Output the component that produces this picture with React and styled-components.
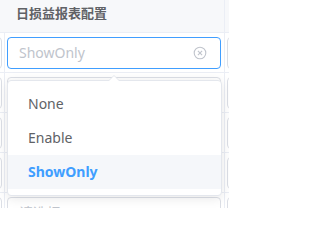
import React from "react";
import styled, { createGlobalStyle } from "styled-components";

const GlobalStyle = createGlobalStyle`
  body {
    margin: 0;
    background: #fff;
    font-family: "Noto Sans", "Noto Sans CJK SC", sans-serif;
  }
  * { box-sizing: border-box; }
`;

// rows 2-4 sit under the open dropdown, so they carry no text
const rows = [
  { placeholder: "ShowOnly", active: true },
  {},
  {},
  {},
  { placeholder: "请选择" },
];

const options = ["None", "Enable", "ShowOnly"];

export default function App() {
  return (
    <>
      <GlobalStyle />
      <Page>
        <Table>
          <HeadCell />
          <HeadCell>日损益报表配置</HeadCell>
          <HeadCell $last />
          {rows.map((row, i) => (
            <React.Fragment key={i}>
              <Cell $align="end">
                <Input />
              </Cell>
              <Cell>
                <Input $active={row.active}>
                  {row.placeholder && <Placeholder>{row.placeholder}</Placeholder>}
                  {row.active && (
                    <svg width="14" height="14" viewBox="0 0 14 14">
                      <circle cx="7" cy="7" r="5.8" fill="none" stroke="#c0c4cc" strokeWidth="1.1" />
                      <path d="M4.9 4.9 L9.1 9.1 M9.1 4.9 L4.9 9.1" stroke="#c0c4cc" strokeWidth="1.1" />
                    </svg>
                  )}
                </Input>
              </Cell>
              <Cell $last>
                <Input />
              </Cell>
            </React.Fragment>
          ))}
        </Table>
        <Dropdown>
          <Arrow />
          <List>
            {options.map(opt => (
              <Item key={opt} $selected={opt === "ShowOnly"}>
                {opt}
              </Item>
            ))}
          </List>
        </Dropdown>
      </Page>
    </>
  );
}

const Page = styled.div`
  position: relative;
  width: 229px;
  height: 208px;
  overflow: hidden;
`;

const Table = styled.div`
  display: grid;
  grid-template-columns: 5px 220px 1fr;
  grid-auto-rows: auto;
`;

const HeadCell = styled.div`
  height: 33px;
  background: #f7f8fa;
  border-bottom: 1px solid #ebeef5;
  border-right: ${p => (p.$last ? "none" : "1px solid #ebeef5")};
  padding: 0 11px 7px;
  display: flex;
  align-items: center;
  font-size: 13px;
  font-weight: 700;
  color: #606266;
  white-space: nowrap;
  overflow: hidden;
`;

const Cell = styled.div`
  height: 40px;
  border-bottom: 1px solid #ebeef5;
  border-right: ${p => (p.$last ? "none" : "1px solid #ebeef5")};
  padding: 4px 2px 0;
  display: flex;
  justify-content: ${p => (p.$align === "end" ? "flex-end" : "flex-start")};
  overflow: hidden;
`;

const Input = styled.div`
  flex: none;
  width: 214px;
  height: 32px;
  border: 1px solid ${p => (p.$active ? "#409eff" : "#dcdfe6")};
  border-radius: 4px;
  padding: 0 13px 0 11px;
  display: flex;
  align-items: center;
  justify-content: space-between;
  font-size: 14px;
  background: #fff;
`;

const Placeholder = styled.span`
  color: #c0c4cc;
  margin-top: -2px;
`;

const Dropdown = styled.div`
  position: absolute;
  top: 80px;
  left: 7px;
  width: 215px;
  background: #fff;
  border: 1px solid #e4e7ed;
  border-radius: 4px;
  box-shadow: 0 2px 12px rgba(0, 0, 0, 0.1);
`;

const Arrow = styled.div`
  position: absolute;
  top: -6px;
  left: 100px;
  width: 0;
  height: 0;
  border-left: 6px solid transparent;
  border-right: 6px solid transparent;
  border-bottom: 6px solid #e4e7ed;

  &::after {
    content: "";
    position: absolute;
    top: 1px;
    left: -6px;
    border-left: 6px solid transparent;
    border-right: 6px solid transparent;
    border-bottom: 6px solid #fff;
  }
`;

const List = styled.ul`
  list-style: none;
  margin: 0;
  padding: 6px 0;
`;

const Item = styled.li`
  height: 34px;
  line-height: 34px;
  padding: 0 20px;
  font-size: 14px;
  color: ${p => (p.$selected ? "#409eff" : "#606266")};
  font-weight: ${p => (p.$selected ? 700 : 400)};
  background: ${p => (p.$selected ? "#f5f7fa" : "transparent")};
`;
